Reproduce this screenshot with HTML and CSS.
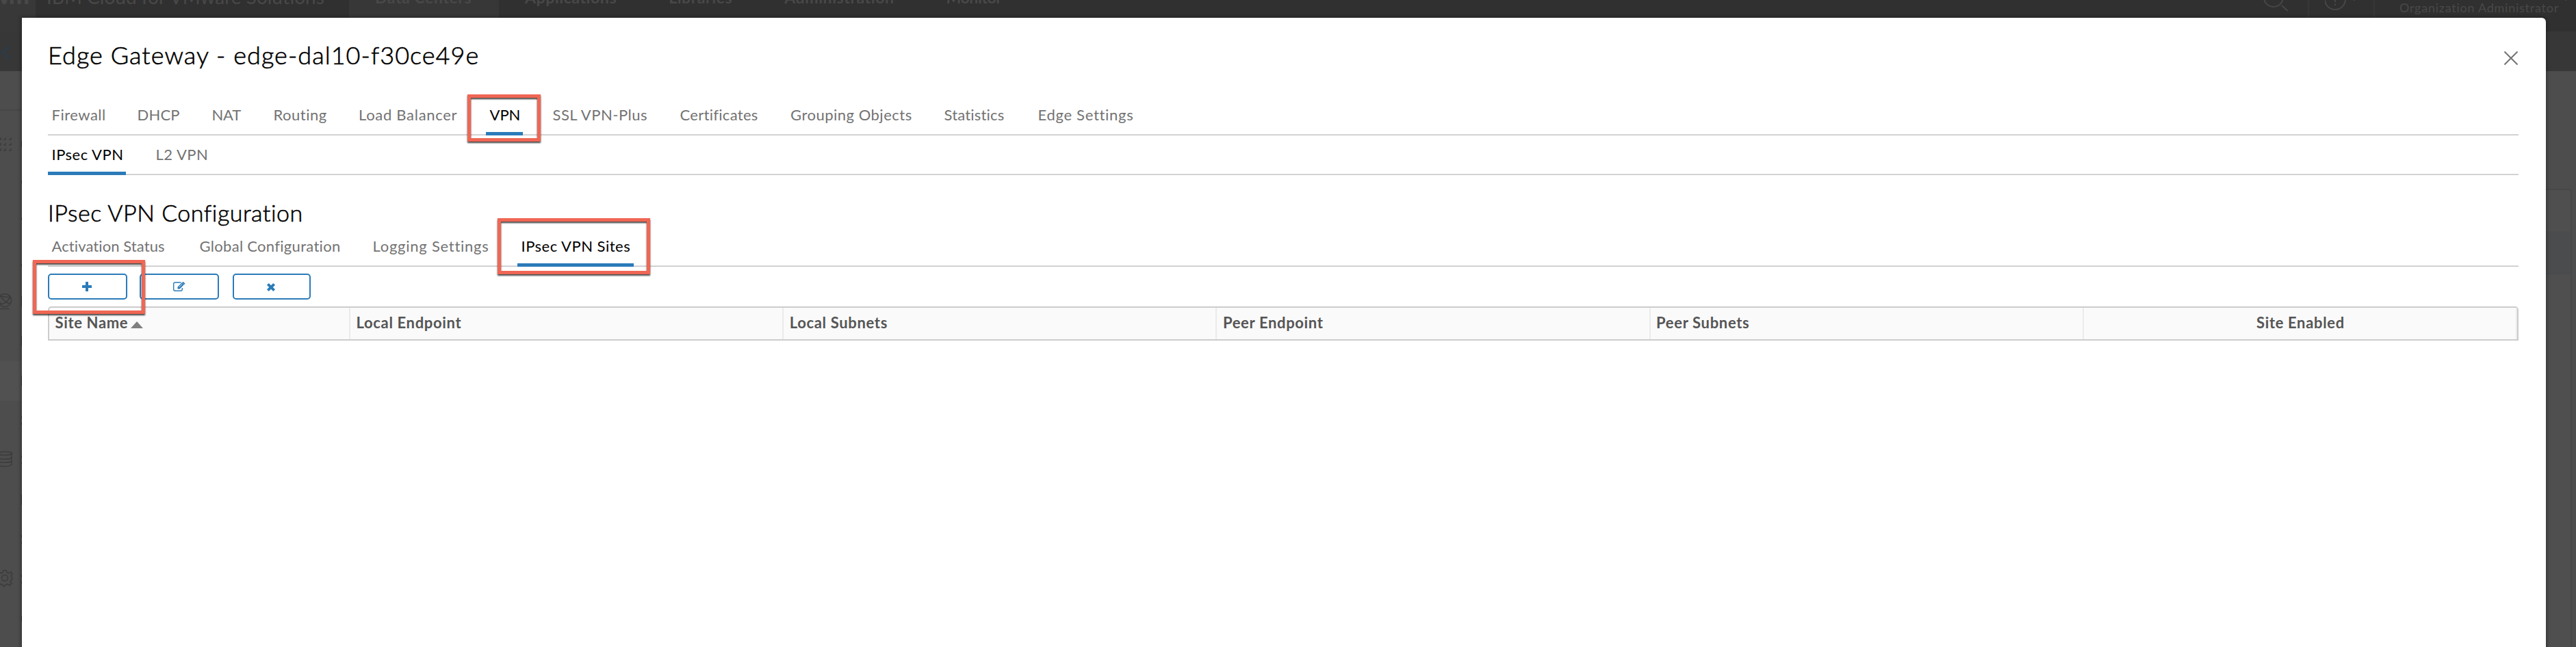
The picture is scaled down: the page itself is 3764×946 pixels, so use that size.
FILE: index.html
```html
<!DOCTYPE html>
<html lang="en">
<head>
<meta charset="utf-8">
<title>Edge Gateway</title>
<link rel="stylesheet" href="styles.css">
</head>
<body>
<div class="page">
  <header class="topbar">
    <div class="logo">vm</div>
    <div class="product">IBM Cloud for VMware Solutions</div>
    <nav class="topnav">
      <span class="topnav-item current">Data Centers</span>
      <span class="topnav-item">Applications</span>
      <span class="topnav-item">Libraries</span>
      <span class="topnav-item">Administration</span>
      <span class="topnav-item tight">Monitor</span>
    </nav>
    <div class="top-icon search"><svg width="40" height="50" viewBox="0 0 40 50"><circle cx="19" cy="25" r="14"/><path d="M31 37l9 8"/></svg></div>
    <div class="top-icon help"><svg width="70" height="50" viewBox="0 0 70 50"><circle cx="15" cy="28" r="15"/><path d="M15 24v8M15 34.500v2.500M38 25l5 4 5-4"/></svg></div>
    <div class="role">Organization Administrator</div>
    <svg class="user-caret" width="14" height="8" viewBox="0 0 14 8"><path d="M1 1l6 5 6-5"/></svg>
  </header>
  <div class="subheader"><svg width="32" height="58" viewBox="0 0 32 58"><path d="M13 22L4 31l9 9"/></svg></div>
  <div class="body">
    <aside class="sidebar">
      <div class="side-head"></div>
      <div class="side-row"><svg width="32" height="58" viewBox="0 0 32 58"><path d="M-2 24h3v-3M5 24h3v-3M13 24h3v-3M-2 32h3v-3M5 32h3v-3M13 32h3v-3M-2 40h3v-3M5 40h3v-3M13 40h3v-3"/><path class="edge" d="M32 26v9"/></svg></div>
      <div class="side-row"><svg width="32" height="58" viewBox="0 0 32 58"><path class="edge" d="M32 26v4"/></svg></div>
      <div class="side-row"><svg width="32" height="58" viewBox="0 0 32 58"><path class="edge" d="M32 22v4"/></svg></div>
      <div class="side-row"><svg width="32" height="58" viewBox="0 0 32 58"><path class="edge" d="M32 32v4"/></svg></div>
      <div class="side-row"><svg width="32" height="58" viewBox="0 0 32 58"><circle cx="7" cy="27" r="9.500"/><path d="M0 21l15 2-6 7-7 3M9 30l6 2M15 23l-2-4M2 33l-3-4M9 30L1 22M-2 39.500h16"/><path class="edge" d="M32 21v15"/></svg></div>
      <div class="side-row"><svg width="32" height="58" viewBox="0 0 32 58"><path class="edge" d="M32 21v15"/></svg></div>
      <div class="side-row selected"><svg width="32" height="58" viewBox="0 0 32 58"><path class="edge" d="M32 21v15"/></svg></div>
      <div class="side-row"><svg width="32" height="58" viewBox="0 0 32 58"><path class="edge" d="M32 22v4M32 32v3"/></svg></div>
      <div class="side-row"><svg width="32" height="58" viewBox="0 0 32 58"><ellipse cx="7" cy="19" rx="10.500" ry="2.500"/><path d="M-4 19v16c3 4 19 4 21 0V19M-4 25c3 3 19 3 21 0M-4 30c3 3 19 3 21 0"/><path class="edge" d="M32 22v4M32 32v3"/></svg></div>
      <div class="side-row"><svg width="32" height="58" viewBox="0 0 32 58"><path class="edge" d="M32 21v15"/></svg></div>
      <div class="side-row"><svg width="32" height="58" viewBox="0 0 32 58"><path class="edge" d="M32 22v4M32 32v3"/></svg></div>
      <div class="side-row"><svg width="32" height="58" viewBox="0 0 32 58"><circle cx="7" cy="27" r="4.500"/><path d="M5 16h4l1 3 3 1 3-2 2 3-2 3 1 2 1 1v2l-2 1-1 3 2 2-3 3-3-2-3 1-1 2H5l-1-2-3-1-3 2M5 16l-1 3-3 1-3-2"/><path class="edge" d="M32 22v4M32 32v3"/></svg></div>
      <div class="side-row"><svg width="32" height="58" viewBox="0 0 32 58"><path class="edge" d="M32 25v8"/></svg></div>
    </aside>
    <div class="side-panel"><div class="panel-head"></div><div class="panel-band"></div></div>
  </div>
</div>

<section class="modal">
  <div class="modal-head">
    <h1>Edge Gateway - edge-dal10-f30ce49e</h1>
    <svg class="close" width="22" height="22" viewBox="0 0 22 22"><path d="M1.500 1.500l19 19M20.500 1.500l-19 19"/></svg>
  </div>
  <nav class="tabs main-tabs">
    <a class="tab">Firewall</a><a class="tab">DHCP</a><a class="tab">NAT</a><a class="tab">Routing</a><a class="tab">Load Balancer</a><a class="tab active">VPN<i class="mark mark-vpn"></i></a><a class="tab">SSL VPN-Plus</a><a class="tab">Certificates</a><a class="tab">Grouping Objects</a><a class="tab">Statistics</a><a class="tab">Edge Settings</a>
  </nav>
  <nav class="tabs vpn-tabs">
    <a class="tab active">IPsec VPN</a><a class="tab">L2 VPN</a>
  </nav>
  <h2>IPsec VPN Configuration</h2>
  <nav class="tabs config-tabs">
    <a class="tab">Activation Status</a><a class="tab">Global Configuration</a><a class="tab">Logging Settings</a><a class="tab active">IPsec VPN Sites<i class="mark mark-sites"></i></a>
  </nav>
  <div class="actions">
    <button class="btn add"><svg width="14" height="14" viewBox="0 0 14 14"><path d="M5.500 0h3q.5 0 .5.500V5h4.500q.5 0 .5.500v3q0 .5-.5.500H9v4.500q0 .5-.5.500h-3q-.5 0-.5-.5V9H.500Q0 9 0 8.500v-3Q0 5 .500 5H5V.500Q5 0 5.500 0z"/></svg><i class="mark mark-add"></i></button>
    <button class="btn edit"><svg width="18" height="14" viewBox="0 0 18 14"><path class="line" d="M11.500 1H3Q.7 1 .7 3v8q0 2.200 2.300 2.200h8q2.300 0 2.300-2.200V9"/><path d="M6.500 7.500L13 1l3 3-6.500 6.500h-3zM13.700.5q.7-.8 1.500 0l1.700 1.600q.7.700 0 1.500l-.5.500-3.100-3.100z"/><path class="cut" d="M8.700 7.800l4.500-4.500"/></svg></button>
    <button class="btn remove"><svg width="12" height="12" viewBox="0 0 12 12"><path d="M3.200.4L6 3.200 8.800.4q.5-.4.900 0l1.900 1.900q.4.400 0 .9L8.800 6l2.800 2.800q.4.500 0 .9l-1.900 1.900q-.4.400-.9 0L6 8.800l-2.800 2.800q-.5.400-.9 0L.4 9.700q-.4-.4 0-.9L3.200 6 .4 3.200q-.4-.5 0-.9L2.300.4q.4-.4.900 0z"/></svg></button>
  </div>
  <div class="grid-head">
    <div class="col">Site Name<svg class="sort" width="18" height="10" viewBox="0 0 18 10"><path d="M9 0l9 10H0z"/></svg></div>
    <div class="col">Local Endpoint</div>
    <div class="col">Local Subnets</div>
    <div class="col">Peer Endpoint</div>
    <div class="col">Peer Subnets</div>
    <div class="col centered">Site Enabled</div>
  </div>
</section>
</body>
</html>
```
FILE: styles.css
```css
* { box-sizing: border-box; }
html, body { margin: 0; height: 946px; overflow: hidden; }
body { font-family: Lato, "Open Sans", sans-serif; background: #4d4d4d; position: relative; }
svg { display: block; fill: none; }

/* dimmed application behind the dialog */
.page { height: 946px; overflow: hidden; display: flex; flex-direction: column; }
.topbar { height: 100px; margin-top: -54px; flex: none; display: flex; background: #303030; color: #484848; line-height: 100px; white-space: nowrap; }
.logo { width: 52px; display: flex; justify-content: flex-end; padding-right: 12px; background: #383838; font-size: 36px; font-weight: 900; line-height: 92px; letter-spacing: -3px; }
.product { width: 458px; padding-left: 16px; font-size: 28px; line-height: 98px; }
.topnav { display: flex; flex: 1; font-size: 23px; font-weight: 700; letter-spacing: .6px; }
.topnav-item { padding: 0 38px; }
.topnav-item.current { width: 219px; background: #373737; }
.topnav-item.tight { letter-spacing: -.4px; }
.top-icon svg, .user-caret { stroke: #474747; stroke-width: 2; }
.search { width: 71px; padding-top: 25px; border-right: 2px solid #363636; }
.help { width: 96px; padding: 25px 0 0 23px; border-right: 2px solid #363636; }
.role { width: 272px; padding: 30px 0 0 36px; font-size: 18px; line-height: 70px; letter-spacing: .75px; }
.user-caret { margin: 48px 8px 0 0; }
.subheader { height: 58px; flex: none; background: #373737; stroke: #2b3c49; stroke-width: 3; }
.body { display: flex; justify-content: space-between; flex: 1; }
.sidebar { width: 32px; }
.side-head { height: 58px; border-bottom: 2px solid #464646; margin-bottom: 18px; }
.side-row { height: 58px; stroke: #3c3c3c; stroke-width: 1.600; }
.side-row.selected { background: #515151; }
.edge { stroke: #303030; stroke-width: 2; }
.side-panel { width: 38px; margin: 172px 6px 0 0; border: 2px solid #474747; border-left: 0; border-bottom: 0; border-radius: 0 4px 0 0; background: #4f4f4f; }
.panel-head { height: 60px; }
.panel-band { height: 63px; background: #4a4c4e; border-bottom: 1px solid #474747; }

/* dialog */
.modal { position: absolute; left: 32px; top: 26px; width: 3688px; height: 960px; padding: 32px 40px 0 38px; background: #fff; border-radius: 0 6px 0 0; box-shadow: 0 1px 5px 2px rgba(0, 0, 0, .3); }
.modal-head { display: flex; justify-content: space-between; height: 44px; }
h1, h2 { margin: 0; font-weight: 300; color: #000; white-space: nowrap; -webkit-text-stroke: .6px #000; }
h1 { font-size: 36px; line-height: 44px; letter-spacing: 1.050px; }
h2 { font-size: 34px; line-height: 40px; letter-spacing: .5px; margin-top: 35px; }
.close { margin-top: 16px; stroke: #737373; stroke-width: 2; }
.tabs { display: grid; justify-items: start; height: 44px; font-size: 22px; line-height: 28px; color: #737373; letter-spacing: .5px; box-shadow: inset 0 -1px #c8c8c8, inset 0 -2px #ddd; }
.tab { position: relative; height: 44px; padding: 0 0 0 5.500px; white-space: nowrap; }
.tab.active { color: #000; border-bottom: 5px solid #2b7bb9; }
.main-tabs { margin-top: 52px; grid-template-columns: 125px 109px 90px 124.500px 191.500px 92px 186px 161.500px 224.500px 137px auto; }
.main-tabs .tab:nth-child(2) { letter-spacing: .2px; }
.main-tabs .tab:nth-child(3) { letter-spacing: -.2px; }
.main-tabs .tab:nth-child(5), .main-tabs .tab:nth-child(11) { letter-spacing: .7px; }
.main-tabs .tab:nth-child(6) { letter-spacing: 0; width: 54px; }
.main-tabs .tab:nth-child(8) { letter-spacing: .3px; }
.main-tabs .tab:nth-child(10) { letter-spacing: .2px; }
.vpn-tabs { margin-top: 14px; grid-template-columns: 152px auto; }
.vpn-tabs .active { width: 114px; }
.config-tabs { margin-top: 15px; grid-template-columns: 216px 253px 217px auto; }
.config-tabs .tab:nth-child(1) { letter-spacing: .1px; }
.config-tabs .tab:nth-child(2) { letter-spacing: .3px; }
.config-tabs .tab:nth-child(3) { letter-spacing: .75px; }
.config-tabs .tab:nth-child(4) { letter-spacing: .5px; width: 170px; }

.actions { display: flex; margin-top: 10px; }
.btn { position: relative; width: 116px; height: 38px; padding: 0; display: flex; align-items: center; justify-content: center; background: #fff; border: 2px solid #2b7bb9; border-radius: 5px; fill: #2b7bb9; }
.btn svg { fill: inherit; }
.add svg { margin-right: 2px; }
.edit { margin: 0 20px 0 18px; }
.edit .line { fill: none; stroke: #2b7bb9; stroke-width: 1.400; }
.edit .cut { stroke: #fff; stroke-width: .9; }
.remove { width: 114px; }
.remove svg { margin: 2px 2px 0 0; }

.grid-head { margin-top: 10px; height: 50px; display: grid; grid-template-columns: 440px repeat(5, 1fr); border: 2px solid #ccc; border-radius: 5px 5px 0 0; background: #fafafa; font-size: 22px; font-weight: 700; line-height: 44px; letter-spacing: .66px; color: #555; }
.col { display: flex; padding-left: 8.500px; border-right: 2px solid #ebebeb; white-space: nowrap; }
.centered { justify-content: center; padding: 0 0 0 2px; }
.sort { margin: 20px 0 0 4px; fill: #808080; }

/* highlight frames */
.mark { position: absolute; z-index: 2; border: 5px solid #f06654; filter: drop-shadow(0 2px 1px rgba(0, 0, 0, .75)); }
.mark-vpn { left: -27px; right: -26px; top: -16px; bottom: -14px; }
.mark-sites { left: -29px; right: -24px; top: -27px; bottom: -16px; }
.mark-add { left: -24px; right: -28px; top: -22px; bottom: -23px; }
.add { z-index: 3; }
```
